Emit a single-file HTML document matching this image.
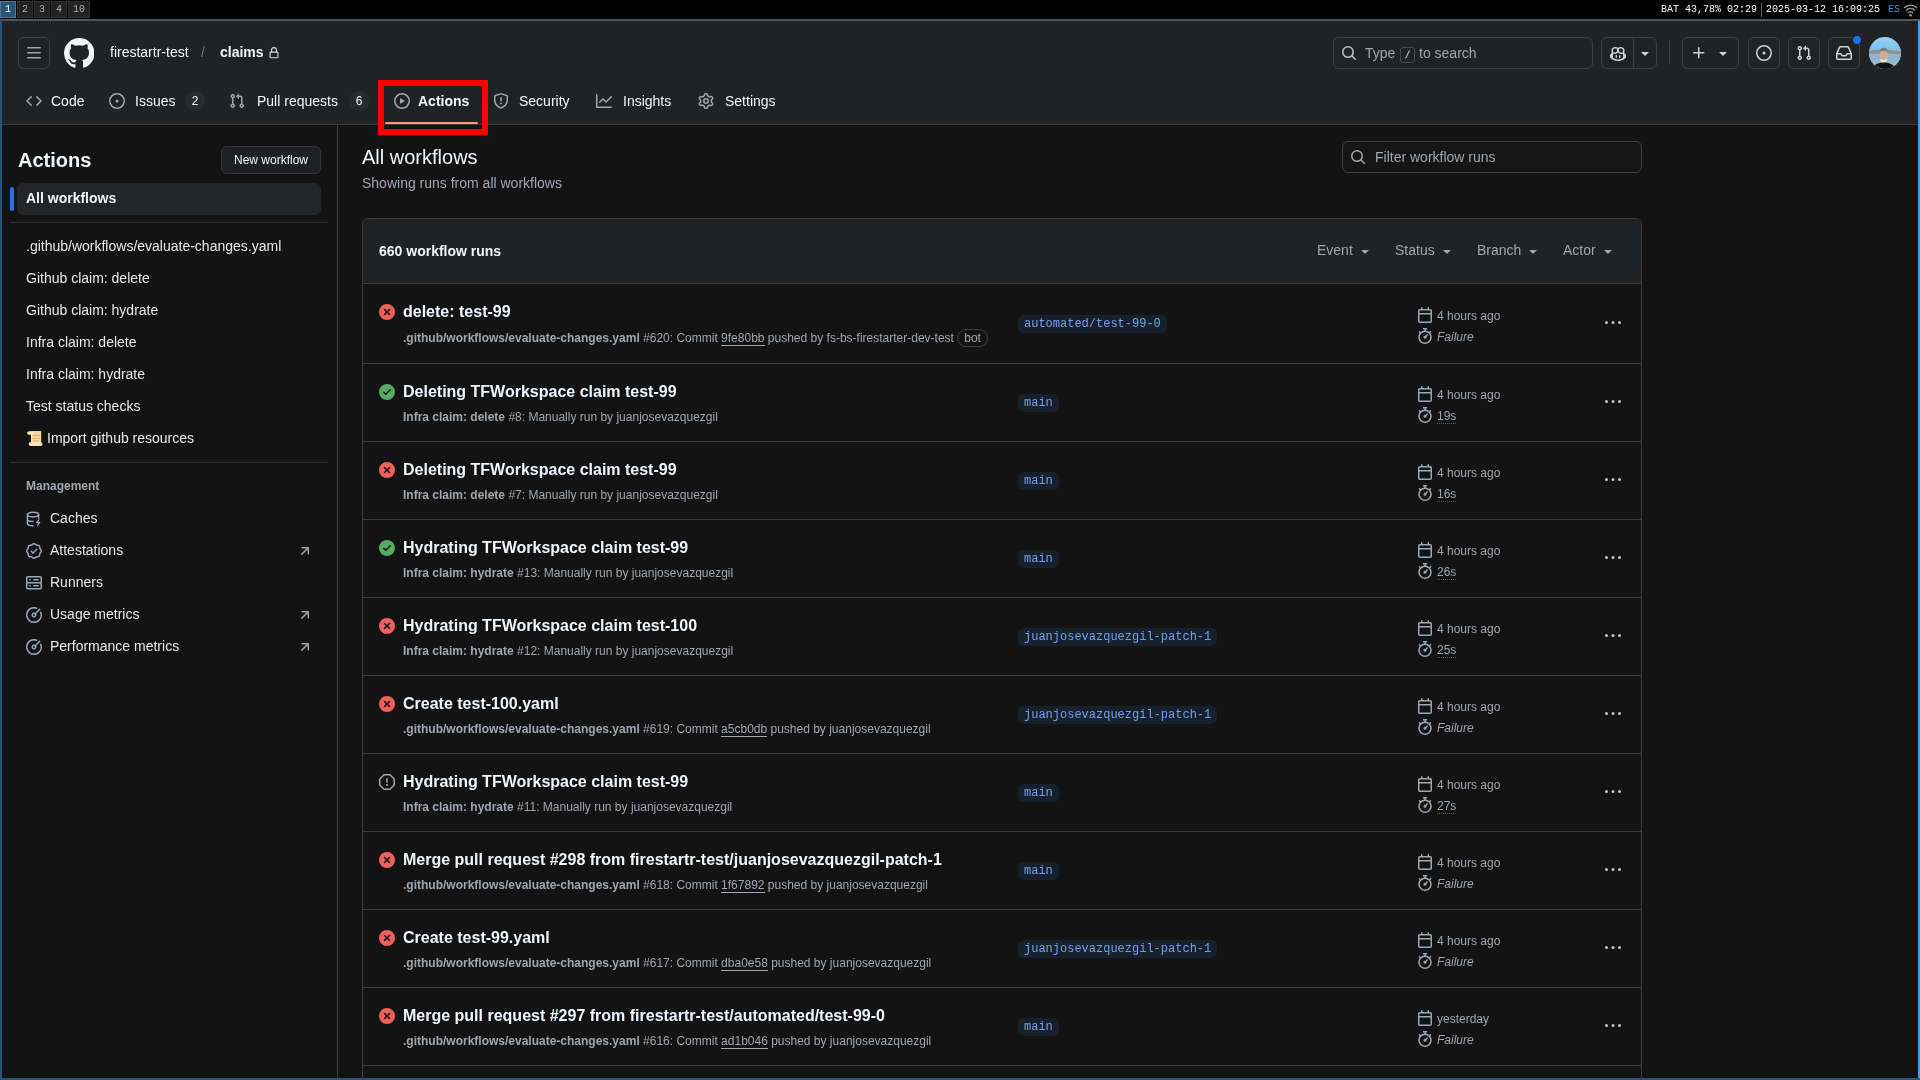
<!DOCTYPE html>
<html><head><meta charset="utf-8"><style>
html,body{margin:0;padding:0;width:1920px;height:1080px;overflow:hidden;background:#131313;font-family:"Liberation Sans",sans-serif}
</style></head><body><div style="position:absolute;left:0;top:0;width:1920px;height:1080px;will-change:transform">
<div style="position:absolute;left:0px;top:0px;width:1920px;height:19px;background:#000"></div><div style="position:absolute;left:0px;top:1px;width:14px;height:15px;background:#285577;border:1px solid #4c7899;color:#fff;font-family:'Liberation Mono',monospace;font-size:10px;line-height:15px;text-align:center"><span style="display:inline-block;transform:scaleY(1.15)">1</span></div><div style="position:absolute;left:17px;top:1px;width:14px;height:15px;background:#222;border:1px solid #333;color:#aaa;font-family:'Liberation Mono',monospace;font-size:10px;line-height:15px;text-align:center"><span style="display:inline-block;transform:scaleY(1.15)">2</span></div><div style="position:absolute;left:34px;top:1px;width:14px;height:15px;background:#222;border:1px solid #333;color:#aaa;font-family:'Liberation Mono',monospace;font-size:10px;line-height:15px;text-align:center"><span style="display:inline-block;transform:scaleY(1.15)">3</span></div><div style="position:absolute;left:51px;top:1px;width:14px;height:15px;background:#222;border:1px solid #333;color:#aaa;font-family:'Liberation Mono',monospace;font-size:10px;line-height:15px;text-align:center"><span style="display:inline-block;transform:scaleY(1.15)">4</span></div><div style="position:absolute;left:68px;top:1px;width:20px;height:15px;background:#222;border:1px solid #333;color:#aaa;font-family:'Liberation Mono',monospace;font-size:10px;line-height:15px;text-align:center"><span style="display:inline-block;transform:scaleY(1.15)">10</span></div><div style="position:absolute;left:1661px;top:2px;height:15px;line-height:15px;font-family:'Liberation Mono',monospace;font-size:10px;color:#fff;white-space:nowrap">BAT 43,78% 02:29</div><div style="position:absolute;left:1761px;top:3px;width:1px;height:14px;background:#666"></div><div style="position:absolute;left:1766px;top:2px;height:15px;line-height:15px;font-family:'Liberation Mono',monospace;font-size:10px;color:#fff;white-space:nowrap">2025-03-12 16:09:25</div><div style="position:absolute;left:1888px;top:2px;height:15px;line-height:15px;font-family:'Liberation Mono',monospace;font-size:10px;color:#4a90c8;white-space:nowrap">ES</div><svg style="position:absolute;left:1903px;top:2px" width="15" height="15" viewBox="0 0 15 15"><g fill="none" stroke="#999" stroke-width="1.3"><path d="M1 6 A9 9 0 0 1 14 6"/><path d="M3 8.5 A6 6 0 0 1 12 8.5"/><path d="M5 11 A3.2 3.2 0 0 1 10 11"/></g><circle cx="7.5" cy="13.3" r="1.3" fill="#999"/></svg><div style="position:absolute;left:0px;top:19px;width:1920px;height:2px;background:#4a5866"></div><div style="position:absolute;left:0px;top:19px;width:2px;height:1061px;background:#265479"></div><div style="position:absolute;left:1918px;top:21px;width:2px;height:1059px;background:#3aa0f2"></div><div style="position:absolute;left:0px;top:1078px;width:1920px;height:2px;background:#2b5578"></div><div style="position:absolute;left:2px;top:125px;width:1916px;height:953px;background:#131313"></div><div style="position:absolute;left:2px;top:21px;width:1916px;height:103px;background:#212224"></div><div style="position:absolute;left:2px;top:124px;width:1916px;height:1px;background:#3b3c3e"></div><div style="position:absolute;left:18px;top:37px;width:32px;height:32px;box-sizing:border-box;border:1px solid #3d3f42;border-radius:6px"></div><svg style="position:absolute;left:26px;top:45px;" width="16" height="16" viewBox="0 0 16 16"><path fill="#a0a6ae" d="M1 2.75A.75.75 0 0 1 1.75 2h12.5a.75.75 0 0 1 0 1.5H1.75A.75.75 0 0 1 1 2.75Zm0 5A.75.75 0 0 1 1.75 7h12.5a.75.75 0 0 1 0 1.5H1.75A.75.75 0 0 1 1 7.75ZM1.75 12h12.5a.75.75 0 0 1 0 1.5H1.75a.75.75 0 0 1 0-1.5Z"/></svg><svg style="position:absolute;left:63.6px;top:37.7px;" width="30.5" height="30.5" viewBox="0 0 16 16"><path fill="#f0f6fc" d="M8 0c4.42 0 8 3.58 8 8a8.013 8.013 0 0 1-5.45 7.59c-.4.08-.55-.17-.55-.38 0-.27.01-1.130.01-2.2 0-.75-.25-1.23-.54-1.48 1.78-.2 3.65-.88 3.65-3.95 0-.88-.31-1.59-.82-2.15.08-.2.36-1.02-.08-2.12 0 0-.67-.22-2.2.82-.64-.18-1.32-.27-2-.27-.68 0-1.36.09-2 .27-1.53-1.03-2.2-.82-2.2-.82-.44 1.1-.16 1.920-.08 2.12-.51.56-.82 1.28-.82 2.15 0 3.06 1.86 3.75 3.64 3.95-.23.2-.44.55-.51 1.07-.46.21-1.61.55-2.33-.66-.15-.24-.6-.83-1.23-.82-.67.01-.27.38.01.53.34.19.73.9.82 1.13.16.45.68 1.31 2.69.94 0 .67.01 1.3.01 1.49 0 .21-.15.45-.55.38A7.995 7.995 0 0 1 0 8c0-4.42 3.58-8 8-8Z"/></svg><div style="position:absolute;left:110px;top:42.0px;height:20px;line-height:20px;font-size:14px;color:#f0f6fc;font-weight:normal;white-space:nowrap;">firestartr-test</div><div style="position:absolute;left:201px;top:42.0px;height:20px;line-height:20px;font-size:14px;color:#6e7681;font-weight:normal;white-space:nowrap;">/</div><div style="position:absolute;left:220px;top:42.0px;height:20px;line-height:20px;font-size:14px;color:#f0f6fc;font-weight:bold;white-space:nowrap;">claims</div><svg style="position:absolute;left:268px;top:46.7px;" width="12" height="12" viewBox="0 0 16 16"><path fill="#d8dadd" d="M4 4a4 4 0 0 1 8 0v2h.25c.966 0 1.75.784 1.75 1.75v5.5A1.75 1.75 0 0 1 12.25 15h-8.5A1.75 1.75 0 0 1 2 13.25v-5.5C2 6.784 2.784 6 3.750 6H4Zm8.25 3.5h-8.5a.25.25 0 0 0-.25.25v5.5c0 .138.112.25.25.25h8.5a.25.25 0 0 0 .25-.25v-5.5a.25.25 0 0 0-.25-.25ZM10.5 6V4a2.5 2.5 0 1 0-5 0v2Z"/></svg><div style="position:absolute;left:1333px;top:37px;width:260px;height:32px;box-sizing:border-box;border:1px solid #3d3f42;border-radius:6px"></div><svg style="position:absolute;left:1341.3px;top:45px;" width="16" height="16" viewBox="0 0 16 16"><path fill="#c0c3c7" d="M10.68 11.74a6 6 0 0 1-7.922-8.982 6 6 0 0 1 8.982 7.922l3.04 3.04a.749.749 0 0 1-.326 1.275.749.749 0 0 1-.734-.215ZM11.5 7a4.499 4.499 0 1 0-8.997 0A4.499 4.499 0 0 0 11.5 7Z"/></svg><div style="position:absolute;left:1365px;top:43.0px;height:20px;line-height:20px;font-size:14px;color:#a0a6ae;font-weight:normal;white-space:nowrap;">Type</div><div style="position:absolute;left:1400px;top:47px;width:15px;height:16px;box-sizing:border-box;border:1px solid #4a4c50;border-radius:3px"></div><svg style="position:absolute;left:1400px;top:47px" width="15" height="16"><path d="M5.6 11.5 9.4 3.5" stroke="#b8bbbf" stroke-width="1.1"/></svg><div style="position:absolute;left:1419px;top:43.0px;height:20px;line-height:20px;font-size:14px;color:#a0a6ae;font-weight:normal;white-space:nowrap;">to search</div><div style="position:absolute;left:1601px;top:37px;width:56px;height:32px;box-sizing:border-box;border:1px solid #3d3f42;border-radius:6px"></div><div style="position:absolute;left:1633px;top:38px;width:1px;height:30px;background:#3d3f42"></div><svg style="position:absolute;left:1610px;top:45.5px;" width="16" height="16" viewBox="0 0 16 16"><path fill="#d0d3d6" d="M7.998 15.035c-4.562 0-7.873-2.914-7.998-3.749V9.338c.085-.628.677-1.686 1.588-2.065.013-.07.024-.143.036-.218.029-.183.06-.384.126-.612-.201-.508-.254-1.084-.254-1.656 0-.87.128-1.769.693-2.484.579-.733 1.494-1.124 2.724-1.261 1.206-.134 2.262.034 2.944.765.05.053.096.108.139.165.044-.057.094-.112.143-.165.682-.731 1.738-.899 2.944-.765 1.23.137 2.145.528 2.724 1.261.566.715.693 1.614.693 2.484 0 .572-.053 1.148-.254 1.656.066.228.098.429.126.612.012.076.024.148.037.218.924.385 1.522 1.471 1.591 2.095v1.872c0 .766-3.351 3.795-8.002 3.795Zm0-1.485c2.28 0 4.584-1.11 5.002-1.433V7.862l-.023-.116c-.49.21-1.075.291-1.727.291-1.146 0-2.059-.327-2.71-.991A3.222 3.222 0 0 1 8 6.303a3.24 3.240 0 0 1-.544.743c-.65.664-1.563.991-2.71.991-.652 0-1.236-.081-1.727-.291l-.023.116v4.255c.419.323 2.722 1.433 5.002 1.433ZM6.762 2.830c-.193-.206-.637-.413-1.682-.297-1.019.113-1.479.404-1.713.7-.247.312-.369.789-.369 1.554 0 .793.129 1.171.308 1.371.162.181.519.379 1.442.379.853 0 1.339-.235 1.638-.54.315-.322.527-.827.617-1.553.117-.935-.037-1.395-.241-1.614Zm4.155-.297c-1.044-.116-1.488.091-1.681.297-.204.219-.359.679-.242 1.614.091.726.303 1.231.618 1.553.299.305.784.54 1.638.54.922 0 1.28-.198 1.442-.379.179-.2.308-.578.308-1.371 0-.765-.123-1.242-.37-1.554-.233-.296-.693-.587-1.713-.7Z M6.25 9.037a.75.75 0 0 1 .75.75v1.501a.75.75 0 0 1-1.5 0V9.787a.75.75 0 0 1 .75-.75Zm4.25.75v1.501a.75.75 0 0 1-1.5 0V9.787a.75.75 0 0 1 1.5 0Z"/></svg><svg style="position:absolute;left:1637px;top:45px;" width="16" height="16" viewBox="0 0 16 16"><path fill="#d0d3d6" d="m4.427 7.427 3.396 3.396a.25.25 0 0 0 .354 0l3.396-3.396A.25.25 0 0 0 11.396 7H4.604a.25.25 0 0 0-.177.427Z"/></svg><div style="position:absolute;left:1669px;top:40px;width:1px;height:24px;background:#3d3f42"></div><div style="position:absolute;left:1682px;top:37px;width:57px;height:32px;box-sizing:border-box;border:1px solid #3d3f42;border-radius:6px"></div><svg style="position:absolute;left:1690.5px;top:45px;" width="16" height="16" viewBox="0 0 16 16"><path fill="#d0d3d6" d="M7.75 2a.75.75 0 0 1 .75.75V7h4.25a.75.75 0 0 1 0 1.5H8.5v4.25a.75.75 0 0 1-1.5 0V8.5H2.75a.75.75 0 0 1 0-1.5H7V2.75A.75.75 0 0 1 7.75 2Z"/></svg><svg style="position:absolute;left:1715px;top:45px;" width="16" height="16" viewBox="0 0 16 16"><path fill="#d0d3d6" d="m4.427 7.427 3.396 3.396a.25.25 0 0 0 .354 0l3.396-3.396A.25.25 0 0 0 11.396 7H4.604a.25.25 0 0 0-.177.427Z"/></svg><div style="position:absolute;left:1748px;top:37px;width:32px;height:32px;box-sizing:border-box;border:1px solid #3d3f42;border-radius:6px"></div><svg style="position:absolute;left:1756px;top:45px;" width="16" height="16" viewBox="0 0 16 16"><path fill="#d0d3d6" d="M8 9.5a1.5 1.5 0 1 0 0-3 1.5 1.5 0 0 0 0 3Z M8 0a8 8 0 1 1 0 16A8 8 0 0 1 8 0ZM1.5 8a6.5 6.5 0 1 0 13 0 6.5 6.5 0 0 0-13 0Z"/></svg><div style="position:absolute;left:1788px;top:37px;width:32px;height:32px;box-sizing:border-box;border:1px solid #3d3f42;border-radius:6px"></div><svg style="position:absolute;left:1796px;top:45px;" width="16" height="16" viewBox="0 0 16 16"><path fill="#d0d3d6" d="M1.5 3.25a2.25 2.25 0 1 1 3 2.122v5.256a2.251 2.251 0 1 1-1.5 0V5.372A2.25 2.25 0 0 1 1.5 3.25Zm5.677-.177L9.573.677A.25.25 0 0 1 10 .854V2.5h1A2.5 2.5 0 0 1 13.5 5v5.628a2.251 2.251 0 1 1-1.5 0V5a1 1 0 0 0-1-1h-1v1.646a.25.25 0 0 1-.427.177L7.177 3.427a.25.25 0 0 1 0-.354ZM3.75 2.5a.75.75 0 1 0 0 1.5.75.75 0 0 0 0-1.5Zm0 9.5a.75.75 0 1 0 0 1.5.75.75 0 0 0 0-1.5Zm8.25.75a.75.75 0 1 0 1.5 0 .75.75 0 0 0-1.5 0Z"/></svg><div style="position:absolute;left:1828px;top:37px;width:32px;height:32px;box-sizing:border-box;border:1px solid #3d3f42;border-radius:6px"></div><svg style="position:absolute;left:1836px;top:45px;" width="16" height="16" viewBox="0 0 16 16"><path fill="#d0d3d6" d="M2.8 2.06A1.75 1.75 0 0 1 4.41 1h7.18c.7 0 1.333.417 1.61 1.06l2.74 6.395c.04.093.06.194.06.295v4.5A1.75 1.75 0 0 1 14.25 15H1.75A1.75 1.75 0 0 1 0 13.25v-4.5c0-.101.02-.202.06-.295Zm1.61.44a.25.25 0 0 0-.23.152L1.887 8H4.75a.75.75 0 0 1 .6.3L6.625 10h2.75l1.275-1.7a.75.75 0 0 1 .6-.3h2.863L11.820 2.652a.25.25 0 0 0-.23-.152Zm10.09 7h-2.875l-1.275 1.7a.75.75 0 0 1-.6.3h-3.5a.75.75 0 0 1-.6-.3L4.375 9.5H1.5v3.75c0 .138.112.25.25.25h12.5a.25.25 0 0 0 .25-.25Z"/></svg><div style="position:absolute;left:1851.5px;top:34.5px;width:8px;height:8px;background:#1f6feb;border-radius:50%;border:1.5px solid #212224;box-sizing:content-box"></div><svg style="position:absolute;left:1869px;top:37px" width="32" height="32" viewBox="0 0 32 32"><defs><clipPath id="av"><circle cx="16" cy="16" r="16"/></clipPath><linearGradient id="sky" x1="0" y1="0" x2="0" y2="1"><stop offset="0" stop-color="#9ad3f2"/><stop offset="0.35" stop-color="#7cc3ec"/><stop offset="1" stop-color="#7cc3ec"/></linearGradient><linearGradient id="wat" x1="0" y1="0" x2="0" y2="1"><stop offset="0" stop-color="#aab7bd"/><stop offset="0.4" stop-color="#8fb3c8"/><stop offset="1" stop-color="#9cc4da"/></linearGradient></defs><g clip-path="url(#av)"><rect width="32" height="32" fill="url(#sky)"/><rect x="0" y="12" width="32" height="20" fill="url(#wat)"/><path d="M0 13.5 6 12.5 12 13 20 12.8 26 13.5 32 14v3H0Z" fill="#7d8a8f" opacity=".7"/><path d="M10.5 17.5c0-4 1.6-6.5 4.2-6.5s4.3 2.5 4.3 6.5v4c0 2-1.8 4-4.3 4s-4.2-2-4.2-4Z" fill="#c8ada0"/><path d="M10.3 16c0-3.3 1.8-5.2 4.4-5.2s4.5 1.9 4.5 5.2c-.8-1.8-2.4-2.3-4.5-2.3s-3.6.5-4.4 2.3Z" fill="#7a7a7a"/><path d="M10.8 21.5c.4 2.6 2 4.5 3.9 4.5s3.6-1.9 4-4.5c-.9 1-2.2 1.4-4 1.4s-3-.4-3.9-1.4Z" fill="#e8e4de"/><path d="M3 34c.5-5.5 4.5-8.6 11.7-8.6S26.5 28.5 27 34Z" fill="#121212"/></g></svg><svg style="position:absolute;left:26px;top:93px;" width="16" height="16" viewBox="0 0 16 16"><path fill="#a0a6ae" d="m11.28 3.22 4.25 4.25a.75.75 0 0 1 0 1.06l-4.25 4.25a.749.749 0 0 1-1.275-.326.749.749 0 0 1 .215-.734L13.940 8l-3.72-3.72a.749.749 0 0 1 .326-1.275.749.749 0 0 1 .734.215Zm-6.56 0a.751.751 0 0 1 1.042.018.751.751 0 0 1 .018 1.042L2.060 8l3.72 3.72a.749.749 0 0 1-.326 1.275.749.749 0 0 1-.734-.215L.47 8.53a.75.75 0 0 1 0-1.06Z"/></svg><div style="position:absolute;left:51px;top:91.0px;height:20px;line-height:20px;font-size:14px;color:#f0f6fc;font-weight:normal;white-space:nowrap;">Code</div><svg style="position:absolute;left:109px;top:93px;" width="16" height="16" viewBox="0 0 16 16"><path fill="#a0a6ae" d="M8 9.5a1.5 1.5 0 1 0 0-3 1.5 1.5 0 0 0 0 3Z M8 0a8 8 0 1 1 0 16A8 8 0 0 1 8 0ZM1.5 8a6.5 6.5 0 1 0 13 0 6.5 6.5 0 0 0-13 0Z"/></svg><div style="position:absolute;left:135px;top:91.0px;height:20px;line-height:20px;font-size:14px;color:#f0f6fc;font-weight:normal;white-space:nowrap;">Issues</div><div style="position:absolute;left:185px;top:91px;width:20px;height:20px;border-radius:10px;background:#2a2b2e;color:#f0f6fc;font-size:12px;line-height:20px;text-align:center">2</div><svg style="position:absolute;left:229px;top:93px;" width="16" height="16" viewBox="0 0 16 16"><path fill="#a0a6ae" d="M1.5 3.25a2.25 2.25 0 1 1 3 2.122v5.256a2.251 2.251 0 1 1-1.5 0V5.372A2.25 2.25 0 0 1 1.5 3.25Zm5.677-.177L9.573.677A.25.25 0 0 1 10 .854V2.5h1A2.5 2.5 0 0 1 13.5 5v5.628a2.251 2.251 0 1 1-1.5 0V5a1 1 0 0 0-1-1h-1v1.646a.25.25 0 0 1-.427.177L7.177 3.427a.25.25 0 0 1 0-.354ZM3.75 2.5a.75.75 0 1 0 0 1.5.75.75 0 0 0 0-1.5Zm0 9.5a.75.75 0 1 0 0 1.5.75.75 0 0 0 0-1.5Zm8.25.75a.75.75 0 1 0 1.5 0 .75.75 0 0 0-1.5 0Z"/></svg><div style="position:absolute;left:257px;top:91.0px;height:20px;line-height:20px;font-size:14px;color:#f0f6fc;font-weight:normal;white-space:nowrap;">Pull requests</div><div style="position:absolute;left:349px;top:91px;width:20px;height:20px;border-radius:10px;background:#2a2b2e;color:#f0f6fc;font-size:12px;line-height:20px;text-align:center">6</div><svg style="position:absolute;left:394px;top:93px;" width="16" height="16" viewBox="0 0 16 16"><path fill="#a0a6ae" d="M8 0a8 8 0 1 1 0 16A8 8 0 0 1 8 0ZM1.5 8a6.5 6.5 0 1 0 13 0 6.5 6.5 0 0 0-13 0Zm4.879-2.773 4.264 2.559a.25.25 0 0 1 0 .428l-4.264 2.559A.25.25 0 0 1 6 10.559V5.442a.25.25 0 0 1 .379-.215Z"/></svg><div style="position:absolute;left:418px;top:91.0px;height:20px;line-height:20px;font-size:14px;color:#f0f6fc;font-weight:bold;white-space:nowrap;">Actions</div><svg style="position:absolute;left:493px;top:93px;" width="16" height="16" viewBox="0 0 16 16"><path fill="#a0a6ae" d="M7.467.133a1.748 1.748 0 0 1 1.066 0l5.25 1.68A1.75 1.75 0 0 1 15 3.48V7c0 1.566-.32 3.182-1.303 4.682-.983 1.498-2.585 2.813-5.032 3.855a1.697 1.697 0 0 1-1.33 0c-2.447-1.042-4.049-2.357-5.032-3.855C1.32 10.182 1 8.566 1 7V3.48a1.755 1.755 0 0 1 1.217-1.667Zm.61 1.429a.25.25 0 0 0-.153 0l-5.25 1.68a.25.25 0 0 0-.174.238V7c0 1.358.275 2.666 1.057 3.86.784 1.194 2.121 2.34 4.366 3.297a.196.196 0 0 0 .154 0c2.245-.956 3.582-2.104 4.366-3.298C13.225 9.666 13.5 8.36 13.5 7V3.48a.251.251 0 0 0-.174-.237l-5.25-1.68ZM8.75 4.75v3a.75.75 0 0 1-1.5 0v-3a.75.75 0 0 1 1.5 0ZM9 10.5a1 1 0 1 1-2 0 1 1 0 0 1 2 0Z"/></svg><div style="position:absolute;left:519px;top:91.0px;height:20px;line-height:20px;font-size:14px;color:#f0f6fc;font-weight:normal;white-space:nowrap;">Security</div><svg style="position:absolute;left:596px;top:93px;" width="16" height="16" viewBox="0 0 16 16"><path fill="#a0a6ae" d="M1.5 1.75V13.5h13.75a.75.75 0 0 1 0 1.5H.75a.75.75 0 0 1-.75-.75V1.75a.75.75 0 0 1 1.5 0Zm14.28 2.53-5.25 5.25a.75.75 0 0 1-1.06 0L7 7.06 4.28 9.78a.751.751 0 0 1-1.042-.018.751.751 0 0 1-.018-1.042l3.25-3.25a.75.75 0 0 1 1.06 0L10 7.94l4.72-4.72a.751.751 0 0 1 1.042.018.751.751 0 0 1 .018 1.042Z"/></svg><div style="position:absolute;left:623px;top:91.0px;height:20px;line-height:20px;font-size:14px;color:#f0f6fc;font-weight:normal;white-space:nowrap;">Insights</div><svg style="position:absolute;left:698px;top:93px;" width="16" height="16" viewBox="0 0 16 16"><path fill="#a0a6ae" d="M8 0a8.2 8.2 0 0 1 .701.031C9.444.095 9.99.645 10.16 1.29l.288 1.107c.018.066.079.158.212.224.231.114.454.243.668.386.123.082.233.09.299.071l1.103-.303c.644-.176 1.392.021 1.82.63.27.385.506.792.704 1.218.315.675.111 1.422-.364 1.891l-.814.806c-.049.048-.098.147-.088.294.016.257.016.515 0 .772-.01.147.038.246.088.294l.814.806c.475.469.679 1.216.364 1.891a7.977 7.977 0 0 1-.704 1.217c-.428.61-1.176.807-1.82.63l-1.102-.302c-.067-.019-.177-.011-.3.071a5.909 5.909 0 0 1-.668.386c-.133.066-.194.158-.211.224l-.29 1.106c-.168.646-.715 1.196-1.458 1.26a8.006 8.006 0 0 1-1.402 0c-.743-.064-1.289-.614-1.458-1.26l-.289-1.106c-.018-.066-.079-.158-.212-.224a5.738 5.738 0 0 1-.668-.386c-.123-.082-.233-.09-.299-.071l-1.103.303c-.644.176-1.392-.021-1.82-.63a8.12 8.12 0 0 1-.704-1.218c-.315-.675-.111-1.422.363-1.891l.815-.806c.05-.048.098-.147.088-.294a6.214 6.214 0 0 1 0-.772c.01-.147-.038-.246-.088-.294l-.815-.806C.635 6.045.431 5.298.746 4.623a7.92 7.920 0 0 1 .704-1.217c.428-.61 1.176-.807 1.82-.63l1.102.302c.067.019.177.011.3-.071.214-.143.437-.272.668-.386.133-.066.194-.158.211-.224l.29-1.106C6.009.645 6.556.095 7.299.03 7.53.01 7.764 0 8 0Zm-.571 1.525c-.036.003-.108.036-.137.146l-.289 1.105c-.147.561-.549.967-.998 1.189-.173.086-.34.183-.5.29-.417.278-.97.423-1.529.27l-1.103-.303c-.109-.03-.175.016-.195.045-.22.312-.412.644-.573.99-.014.031-.021.11.059.19l.815.806c.411.406.562.957.53 1.456a4.709 4.709 0 0 0 0 .582c.032.499-.119 1.05-.53 1.456l-.815.806c-.081.08-.073.159-.059.19.162.346.353.677.573.989.02.03.085.076.195.046l1.102-.303c.56-.153 1.113-.008 1.53.27.161.107.328.204.501.29.447.222.85.629.997 1.189l.289 1.105c.029.109.101.143.137.146a6.6 6.6 0 0 0 1.142 0c.036-.003.108-.036.137-.146l.289-1.105c.147-.561.549-.967.998-1.189.173-.086.34-.183.5-.29.417-.278.97-.423 1.529-.27l1.103.303c.109.029.175-.016.195-.045.22-.313.411-.644.573-.99.014-.031.021-.11-.059-.19l-.815-.806c-.411-.406-.562-.957-.53-1.456a4.709 4.709 0 0 0 0-.582c-.032-.499.119-1.05.53-1.456l.815-.806c.081-.08.073-.159.059-.19a6.464 6.464 0 0 0-.573-.989c-.02-.03-.085-.076-.195-.046l-1.102.303c-.56.153-1.113.008-1.53-.27a4.44 4.44 0 0 0-.501-.29c-.447-.222-.85-.629-.997-1.189l-.289-1.105c-.029-.11-.101-.143-.137-.146a6.6 6.6 0 0 0-1.142 0ZM11 8a3 3 0 1 1-6 0 3 3 0 0 1 6 0ZM9.5 8a1.5 1.5 0 1 0-3.001.001A1.5 1.5 0 0 0 9.5 8Z"/></svg><div style="position:absolute;left:725px;top:91.0px;height:20px;line-height:20px;font-size:14px;color:#f0f6fc;font-weight:normal;white-space:nowrap;">Settings</div><div style="position:absolute;left:385px;top:122px;width:93px;height:2px;background:#f39a7b;border-radius:1px"></div><div style="position:absolute;left:378px;top:80px;width:110px;height:55px;box-sizing:border-box;border:6px solid #ff0000"></div><div style="position:absolute;left:337px;top:125px;width:1px;height:953px;background:#3b3c3e"></div><div style="position:absolute;left:18px;top:145.0px;height:30px;line-height:30px;font-size:20px;color:#f0f6fc;font-weight:bold;white-space:nowrap;">Actions</div><div style="position:absolute;left:221px;top:146px;width:100px;height:28px;box-sizing:border-box;background:#202123;border:1px solid #333437;border-radius:6px"></div><div style="position:absolute;left:234px;top:151.0px;height:18px;line-height:18px;font-size:12px;color:#f0f6fc;font-weight:normal;white-space:nowrap;">New workflow</div><div style="position:absolute;left:17px;top:183px;width:304px;height:32px;background:#242527;border-radius:6px"></div><div style="position:absolute;left:10px;top:187px;width:4px;height:24px;background:#2274ea;border-radius:2px"></div><div style="position:absolute;left:26px;top:188.0px;height:20px;line-height:20px;font-size:14px;color:#f0f6fc;font-weight:bold;white-space:nowrap;">All workflows</div><div style="position:absolute;left:10px;top:222px;width:318px;height:1px;background:#2e3033"></div><div style="position:absolute;left:26px;top:236.0px;height:20px;line-height:20px;font-size:14px;color:#e6e8eb;font-weight:normal;white-space:nowrap;">.github/workflows/evaluate-changes.yaml</div><div style="position:absolute;left:26px;top:268.0px;height:20px;line-height:20px;font-size:14px;color:#e6e8eb;font-weight:normal;white-space:nowrap;">Github claim: delete</div><div style="position:absolute;left:26px;top:300.0px;height:20px;line-height:20px;font-size:14px;color:#e6e8eb;font-weight:normal;white-space:nowrap;">Github claim: hydrate</div><div style="position:absolute;left:26px;top:332.0px;height:20px;line-height:20px;font-size:14px;color:#e6e8eb;font-weight:normal;white-space:nowrap;">Infra claim: delete</div><div style="position:absolute;left:26px;top:364.0px;height:20px;line-height:20px;font-size:14px;color:#e6e8eb;font-weight:normal;white-space:nowrap;">Infra claim: hydrate</div><div style="position:absolute;left:26px;top:396.0px;height:20px;line-height:20px;font-size:14px;color:#e6e8eb;font-weight:normal;white-space:nowrap;">Test status checks</div><svg style="position:absolute;left:26px;top:430px" width="17" height="17" viewBox="0 0 17 17"><rect x="5" y="1" width="10.2" height="14" fill="#f6d49c"/><path d="M1.2 3c0-1 .8-1.8 1.8-1.8h4v3.6H3C2 4.8 1.2 4 1.2 3Z" fill="#fbe3b6"/><rect x="2.7" y="12" width="13.8" height="4" rx="2" fill="#fbe2b8"/><path d="M6 5.5h8.2M6 8.4h8.2M7 11h6" stroke="#d9ae6a" stroke-width=".8"/><rect x="5" y="1" width="1.2" height="11" fill="#fff0d4" opacity=".7"/></svg><div style="position:absolute;left:47px;top:428.0px;height:20px;line-height:20px;font-size:14px;color:#e6e8eb;font-weight:normal;white-space:nowrap;">Import github resources</div><div style="position:absolute;left:10px;top:462px;width:318px;height:1px;background:#2e3033"></div><div style="position:absolute;left:26px;top:477.0px;height:18px;line-height:18px;font-size:12px;color:#a0a6ae;font-weight:bold;white-space:nowrap;">Management</div><svg style="position:absolute;left:26px;top:511px" width="16" height="16" viewBox="0 0 16 16"><g fill="none" stroke="#a0a6ae" stroke-width="1.5" stroke-linecap="round"><ellipse cx="7" cy="3.6" rx="5.6" ry="2.3"/><path d="M1.4 3.6v9c0 1.2 2.4 2.2 5.6 2.3M1.4 8.2c0 1.2 2.4 2.2 5.6 2.3M12.6 3.6v3.4"/></g><path fill="#a0a6ae" d="M13.2 7.6 9.6 12.1h2.3l-1.1 3.7 3.9-4.9h-2.3l1.3-3.3Z"/></svg><div style="position:absolute;left:50px;top:508.0px;height:20px;line-height:20px;font-size:14px;color:#e6e8eb;font-weight:normal;white-space:nowrap;">Caches</div><svg style="position:absolute;left:26px;top:543px;" width="16" height="16" viewBox="0 0 16 16"><path fill="#a0a6ae" d="m9.585.52.929.68c.153.112.331.186.518.215l1.138.175a2.678 2.678 0 0 1 2.240 2.240l.174 1.139c.029.187.103.365.215.518l.68.928a2.677 2.677 0 0 1 0 3.170l-.68.928a1.174 1.174 0 0 0-.215.518l-.175 1.138a2.678 2.678 0 0 1-2.241 2.241l-1.138.175a1.170 1.170 0 0 0-.518.215l-.928.68a2.677 2.677 0 0 1-3.170 0l-.928-.68a1.174 1.174 0 0 0-.518-.215L3.830 14.410a2.678 2.678 0 0 1-2.240-2.240l-.175-1.138a1.170 1.170 0 0 0-.215-.518l-.68-.928a2.677 2.677 0 0 1 0-3.170l.68-.928c.112-.153.186-.331.215-.518l.175-1.140a2.678 2.678 0 0 1 2.240-2.240l1.139-.175c.187-.029.365-.103.518-.215l.928-.68a2.677 2.677 0 0 1 3.170 0ZM7.303 1.728l-.927.68a2.670 2.670 0 0 1-1.180.489l-1.137.174a1.179 1.179 0 0 0-.987.987l-.174 1.136a2.677 2.677 0 0 1-.489 1.180l-.68.928a1.180 1.180 0 0 0 0 1.394l.68.927c.256.348.424.753.489 1.180l.174 1.137c.078.509.478.909.987.987l1.136.174a2.670 2.670 0 0 1 1.180.489l.928.68c.414.305.979.305 1.394 0l.927-.68a2.670 2.670 0 0 1 1.180-.489l1.137-.174a1.180 1.180 0 0 0 .987-.987l.174-1.136a2.670 2.670 0 0 1 .489-1.180l.68-.928a1.176 1.176 0 0 0 0-1.394l-.68-.927a2.686 2.686 0 0 1-.489-1.180l-.174-1.137a1.179 1.179 0 0 0-.987-.987l-1.136-.174a2.677 2.677 0 0 1-1.180-.489l-.928-.68a1.176 1.176 0 0 0-1.394 0ZM11.280 6.780l-3.750 3.750a.75.75 0 0 1-1.060 0L4.720 8.780a.751.751 0 0 1 .018-1.042.751.751 0 0 1 1.042-.018l1.220 1.220 3.220-3.220a.751.751 0 0 1 1.042.018.751.751 0 0 1 .018 1.042Z"/></svg><div style="position:absolute;left:50px;top:540.0px;height:20px;line-height:20px;font-size:14px;color:#e6e8eb;font-weight:normal;white-space:nowrap;">Attestations</div><svg style="position:absolute;left:297px;top:543px;" width="16" height="16" viewBox="0 0 16 16"><path fill="#a0a6ae" d="M4.53 4.75A.75.75 0 0 1 5.28 4h6.01a.75.75 0 0 1 .75.75v6.01a.75.75 0 0 1-1.5 0v-4.2l-5.26 5.27a.749.749 0 0 1-1.275-.326.749.749 0 0 1 .215-.734L9.48 5.5h-4.2a.75.75 0 0 1-.75-.75Z"/></svg><svg style="position:absolute;left:26px;top:575px;" width="16" height="16" viewBox="0 0 16 16"><path fill="#a0a6ae" d="M1.75 1h12.5c.966 0 1.75.784 1.75 1.75v4c0 .372-.116.717-.314 1 .198.283.314.628.314 1v4a1.75 1.75 0 0 1-1.75 1.75H1.75A1.75 1.75 0 0 1 0 12.75v-4c0-.358.109-.707.314-1a1.739 1.739 0 0 1-.314-1v-4C0 1.784.784 1 1.75 1ZM1.5 2.75v4c0 .138.112.25.25.25h12.5a.25.25 0 0 0 .25-.25v-4a.25.25 0 0 0-.25-.25H1.75a.25.25 0 0 0-.25.25Zm.25 5.75a.25.25 0 0 0-.25.25v4c0 .138.112.25.25.25h12.5a.25.25 0 0 0 .25-.25v-4a.25.25 0 0 0-.25-.25ZM7 4.75A.75.75 0 0 1 7.75 4h4.5a.75.75 0 0 1 0 1.5h-4.5A.75.75 0 0 1 7 4.75ZM7.75 10h4.5a.75.75 0 0 1 0 1.5h-4.5a.75.75 0 0 1 0-1.5ZM3 4.75A.75.75 0 0 1 3.75 4h.5a.75.75 0 0 1 0 1.5h-.5A.75.75 0 0 1 3 4.75ZM3.75 10h.5a.75.75 0 0 1 0 1.5h-.5a.75.75 0 0 1 0-1.5Z"/></svg><div style="position:absolute;left:50px;top:572.0px;height:20px;line-height:20px;font-size:14px;color:#e6e8eb;font-weight:normal;white-space:nowrap;">Runners</div><svg style="position:absolute;left:26px;top:607px;" width="16" height="16" viewBox="0 0 16 16"><path fill="#a0a6ae" d="M8 1.5a6.5 6.5 0 1 0 6.016 4.035.75.75 0 0 1 1.388-.57 8 8 0 1 1-4.37-4.37.75.75 0 0 1-.569 1.389A6.473 6.473 0 0 0 8 1.5Zm6.28.22a.75.75 0 0 1 0 1.06l-4.063 4.064a2.5 2.5 0 1 1-1.06-1.06L13.22 1.72a.75.75 0 0 1 1.06 0ZM8 7a1 1 0 1 0 0 2 1 1 0 0 0 0-2Z"/></svg><div style="position:absolute;left:50px;top:604.0px;height:20px;line-height:20px;font-size:14px;color:#e6e8eb;font-weight:normal;white-space:nowrap;">Usage metrics</div><svg style="position:absolute;left:297px;top:607px;" width="16" height="16" viewBox="0 0 16 16"><path fill="#a0a6ae" d="M4.53 4.75A.75.75 0 0 1 5.28 4h6.01a.75.75 0 0 1 .75.75v6.01a.75.75 0 0 1-1.5 0v-4.2l-5.26 5.27a.749.749 0 0 1-1.275-.326.749.749 0 0 1 .215-.734L9.48 5.5h-4.2a.75.75 0 0 1-.75-.75Z"/></svg><svg style="position:absolute;left:26px;top:639px;" width="16" height="16" viewBox="0 0 16 16"><path fill="#a0a6ae" d="M8 1.5a6.5 6.5 0 1 0 6.016 4.035.75.75 0 0 1 1.388-.57 8 8 0 1 1-4.37-4.37.75.75 0 0 1-.569 1.389A6.473 6.473 0 0 0 8 1.5Zm6.28.22a.75.75 0 0 1 0 1.06l-4.063 4.064a2.5 2.5 0 1 1-1.06-1.06L13.22 1.72a.75.75 0 0 1 1.06 0ZM8 7a1 1 0 1 0 0 2 1 1 0 0 0 0-2Z"/></svg><div style="position:absolute;left:50px;top:636.0px;height:20px;line-height:20px;font-size:14px;color:#e6e8eb;font-weight:normal;white-space:nowrap;">Performance metrics</div><svg style="position:absolute;left:297px;top:639px;" width="16" height="16" viewBox="0 0 16 16"><path fill="#a0a6ae" d="M4.53 4.75A.75.75 0 0 1 5.28 4h6.01a.75.75 0 0 1 .75.75v6.01a.75.75 0 0 1-1.5 0v-4.2l-5.26 5.27a.749.749 0 0 1-1.275-.326.749.749 0 0 1 .215-.734L9.48 5.5h-4.2a.75.75 0 0 1-.75-.75Z"/></svg><div style="position:absolute;left:362px;top:142.0px;height:30px;line-height:30px;font-size:20px;color:#f0f6fc;font-weight:normal;white-space:nowrap;">All workflows</div><div style="position:absolute;left:362px;top:173.0px;height:20px;line-height:20px;font-size:14px;color:#a0a6ae;font-weight:normal;white-space:nowrap;">Showing runs from all workflows</div><div style="position:absolute;left:1342px;top:141px;width:300px;height:32px;box-sizing:border-box;border:1px solid #3d3f42;border-radius:6px;background:#151515"></div><svg style="position:absolute;left:1350px;top:149px;" width="16" height="16" viewBox="0 0 16 16"><path fill="#a0a6ae" d="M10.68 11.74a6 6 0 0 1-7.922-8.982 6 6 0 0 1 8.982 7.922l3.04 3.04a.749.749 0 0 1-.326 1.275.749.749 0 0 1-.734-.215ZM11.5 7a4.499 4.499 0 1 0-8.997 0A4.499 4.499 0 0 0 11.5 7Z"/></svg><div style="position:absolute;left:1375px;top:147.0px;height:20px;line-height:20px;font-size:14px;color:#a0a6ae;font-weight:normal;white-space:nowrap;">Filter workflow runs</div><div style="position:absolute;left:362px;top:218px;width:1280px;height:900px;box-sizing:border-box;border:1px solid #3b3c3e;border-radius:6px"></div><div style="position:absolute;left:363px;top:219px;width:1278px;height:64px;background:#212224;border-radius:6px 6px 0 0"></div><div style="position:absolute;left:363px;top:283px;width:1278px;height:1px;background:#3b3c3e"></div><div style="position:absolute;left:379px;top:241.0px;height:20px;line-height:20px;font-size:14px;color:#f0f6fc;font-weight:bold;white-space:nowrap;">660 workflow runs</div><div style="position:absolute;left:1317px;top:240.0px;height:20px;line-height:20px;font-size:14px;color:#a0a6ae;font-weight:normal;white-space:nowrap;">Event</div><svg style="position:absolute;left:1357px;top:243px;" width="16" height="16" viewBox="0 0 16 16"><path fill="#a0a6ae" d="m4.427 7.427 3.396 3.396a.25.25 0 0 0 .354 0l3.396-3.396A.25.25 0 0 0 11.396 7H4.604a.25.25 0 0 0-.177.427Z"/></svg><div style="position:absolute;left:1395px;top:240.0px;height:20px;line-height:20px;font-size:14px;color:#a0a6ae;font-weight:normal;white-space:nowrap;">Status</div><svg style="position:absolute;left:1439px;top:243px;" width="16" height="16" viewBox="0 0 16 16"><path fill="#a0a6ae" d="m4.427 7.427 3.396 3.396a.25.25 0 0 0 .354 0l3.396-3.396A.25.25 0 0 0 11.396 7H4.604a.25.25 0 0 0-.177.427Z"/></svg><div style="position:absolute;left:1477px;top:240.0px;height:20px;line-height:20px;font-size:14px;color:#a0a6ae;font-weight:normal;white-space:nowrap;">Branch</div><svg style="position:absolute;left:1525px;top:243px;" width="16" height="16" viewBox="0 0 16 16"><path fill="#a0a6ae" d="m4.427 7.427 3.396 3.396a.25.25 0 0 0 .354 0l3.396-3.396A.25.25 0 0 0 11.396 7H4.604a.25.25 0 0 0-.177.427Z"/></svg><div style="position:absolute;left:1563px;top:240.0px;height:20px;line-height:20px;font-size:14px;color:#a0a6ae;font-weight:normal;white-space:nowrap;">Actor</div><svg style="position:absolute;left:1600px;top:243px;" width="16" height="16" viewBox="0 0 16 16"><path fill="#a0a6ae" d="m4.427 7.427 3.396 3.396a.25.25 0 0 0 .354 0l3.396-3.396A.25.25 0 0 0 11.396 7H4.604a.25.25 0 0 0-.177.427Z"/></svg><svg style="position:absolute;left:379px;top:304px;" width="16" height="16" viewBox="0 0 16 16"><path fill="#f0605d" d="M2.343 13.657A8 8 0 1 1 13.658 2.343 8 8 0 0 1 2.343 13.657ZM6.03 4.97a.751.751 0 0 0-1.042.018.751.751 0 0 0-.018 1.042L6.940 8 4.97 9.970a.749.749 0 0 0 .326 1.275.749.749 0 0 0 .734-.215L8 9.060l1.97 1.97a.749.749 0 0 0 1.275-.326.749.749 0 0 0-.215-.734L9.060 8l1.97-1.97a.749.749 0 0 0-.326-1.275.749.749 0 0 0-.734.215L8 6.940Z"/></svg><div style="position:absolute;left:403px;top:301.0px;height:22px;line-height:22px;font-size:16px;color:#f0f6fc;font-weight:bold;white-space:nowrap;">delete: test-99</div><div style="position:absolute;left:403px;top:328.5px;height:18px;line-height:18px;font-size:12px;color:#a0a6ae;font-weight:normal;white-space:nowrap;"><b style="font-weight:bold">.github/workflows/evaluate-changes.yaml</b> #620: Commit <span style="border-bottom:1px solid #a0a6ae">9fe80bb</span> pushed by fs-bs-firestarter-dev-test <span style="display:inline-block;border:1px solid #3d3f42;border-radius:10px;padding:0 6px;line-height:16px">bot</span></div><div style="position:absolute;left:1018px;top:315px;height:18px;line-height:18px;padding:0 6px;border-radius:6px;background:#16212d;color:#74a0ea;font-family:'Liberation Mono',monospace;font-size:12px;white-space:nowrap">automated/test-99-0</div><svg style="position:absolute;left:1417px;top:307px;" width="16" height="16" viewBox="0 0 16 16"><path fill="#a0a6ae" d="M4.75 0a.75.75 0 0 1 .75.75V2h5V.75a.75.75 0 0 1 1.5 0V2h1.25c.966 0 1.75.784 1.75 1.75v10.5A1.75 1.75 0 0 1 13.25 16H2.75A1.75 1.75 0 0 1 1 14.25V3.75C1 2.784 1.784 2 2.75 2H4V.75A.75.75 0 0 1 4.75 0ZM2.5 7.5v6.75c0 .138.112.25.25.25h10.5a.25.25 0 0 0 .25-.25V7.5Zm10.75-4H2.75a.25.25 0 0 0-.25.25V6h11V3.75a.25.25 0 0 0-.25-.25Z"/></svg><div style="position:absolute;left:1437px;top:306.5px;height:18px;line-height:18px;font-size:12px;color:#a0a6ae;font-weight:normal;white-space:nowrap;">4 hours ago</div><svg style="position:absolute;left:1417px;top:328px;" width="16" height="16" viewBox="0 0 16 16"><path fill="#a0a6ae" d="M5.75.75A.75.75 0 0 1 6.5 0h3a.75.75 0 0 1 0 1.5h-.75v1l-.001.041a6.724 6.724 0 0 1 3.464 1.435l.007-.006.75-.75a.749.749 0 0 1 1.275.326.749.749 0 0 1-.215.734l-.75.75-.006.007a6.75 6.75 0 1 1-10.548 0L2.72 5.03l-.75-.75a.751.751 0 0 1 .018-1.042.751.751 0 0 1 1.042-.018l.75.75.007.006A6.72 6.72 0 0 1 7.25 2.541V1.5H6.5a.75.75 0 0 1-.75-.75ZM8 14.5a5.25 5.25 0 1 0-.001-10.501A5.25 5.25 0 0 0 8 14.5Zm.389-6.7 1.33-1.33a.75.75 0 1 1 1.061 1.06L9.450 8.861A1.503 1.503 0 0 1 8 10.75a1.499 1.499 0 1 1 .389-2.950Z"/></svg><div style="position:absolute;left:1437px;top:327.5px;height:18px;line-height:18px;font-size:12px;color:#a0a6ae;font-weight:normal;white-space:nowrap;font-style:italic">Failure</div><svg style="position:absolute;left:1605px;top:315px;" width="16" height="16" viewBox="0 0 16 16"><path fill="#c4c7cb" d="M8 9a1.5 1.5 0 1 0 0-3 1.5 1.5 0 0 0 0 3ZM1.5 9a1.5 1.5 0 1 0 0-3 1.5 1.5 0 0 0 0 3Zm13 0a1.5 1.5 0 1 0 0-3 1.5 1.5 0 0 0 0 3Z"/></svg><div style="position:absolute;left:363px;top:363px;width:1278px;height:1px;background:#3b3c3e"></div><svg style="position:absolute;left:379px;top:384px;" width="16" height="16" viewBox="0 0 16 16"><path fill="#56ab62" d="M8 16A8 8 0 1 1 8 0a8 8 0 0 1 0 16Zm3.78-9.72a.751.751 0 0 0-.018-1.042.751.751 0 0 0-1.042-.018L6.750 9.190 5.28 7.72a.751.751 0 0 0-1.042.018.751.751 0 0 0-.018 1.042l2 2a.75.75 0 0 0 1.06 0Z"/></svg><div style="position:absolute;left:403px;top:381.0px;height:22px;line-height:22px;font-size:16px;color:#f0f6fc;font-weight:bold;white-space:nowrap;">Deleting TFWorkspace claim test-99</div><div style="position:absolute;left:403px;top:407.5px;height:18px;line-height:18px;font-size:12px;color:#a0a6ae;font-weight:normal;white-space:nowrap;"><b style="font-weight:bold">Infra claim: delete</b> #8: Manually run by juanjosevazquezgil</div><div style="position:absolute;left:1018px;top:394px;height:18px;line-height:18px;padding:0 6px;border-radius:6px;background:#16212d;color:#74a0ea;font-family:'Liberation Mono',monospace;font-size:12px;white-space:nowrap">main</div><svg style="position:absolute;left:1417px;top:386px;" width="16" height="16" viewBox="0 0 16 16"><path fill="#a0a6ae" d="M4.75 0a.75.75 0 0 1 .75.75V2h5V.75a.75.75 0 0 1 1.5 0V2h1.25c.966 0 1.75.784 1.75 1.75v10.5A1.75 1.75 0 0 1 13.25 16H2.75A1.75 1.75 0 0 1 1 14.25V3.75C1 2.784 1.784 2 2.75 2H4V.75A.75.75 0 0 1 4.75 0ZM2.5 7.5v6.75c0 .138.112.25.25.25h10.5a.25.25 0 0 0 .25-.25V7.5Zm10.75-4H2.75a.25.25 0 0 0-.25.25V6h11V3.75a.25.25 0 0 0-.25-.25Z"/></svg><div style="position:absolute;left:1437px;top:385.5px;height:18px;line-height:18px;font-size:12px;color:#a0a6ae;font-weight:normal;white-space:nowrap;">4 hours ago</div><svg style="position:absolute;left:1417px;top:407px;" width="16" height="16" viewBox="0 0 16 16"><path fill="#a0a6ae" d="M5.75.75A.75.75 0 0 1 6.5 0h3a.75.75 0 0 1 0 1.5h-.75v1l-.001.041a6.724 6.724 0 0 1 3.464 1.435l.007-.006.75-.75a.749.749 0 0 1 1.275.326.749.749 0 0 1-.215.734l-.75.75-.006.007a6.75 6.75 0 1 1-10.548 0L2.72 5.03l-.75-.75a.751.751 0 0 1 .018-1.042.751.751 0 0 1 1.042-.018l.75.75.007.006A6.72 6.72 0 0 1 7.25 2.541V1.5H6.5a.75.75 0 0 1-.75-.75ZM8 14.5a5.25 5.25 0 1 0-.001-10.501A5.25 5.25 0 0 0 8 14.5Zm.389-6.7 1.33-1.33a.75.75 0 1 1 1.061 1.06L9.450 8.861A1.503 1.503 0 0 1 8 10.75a1.499 1.499 0 1 1 .389-2.950Z"/></svg><div style="position:absolute;left:1437px;top:406.5px;height:18px;line-height:18px;font-size:12px;color:#a0a6ae;font-weight:normal;white-space:nowrap;"><span style="border-bottom:1px dotted #55595e">19s</span></div><svg style="position:absolute;left:1605px;top:394px;" width="16" height="16" viewBox="0 0 16 16"><path fill="#c4c7cb" d="M8 9a1.5 1.5 0 1 0 0-3 1.5 1.5 0 0 0 0 3ZM1.5 9a1.5 1.5 0 1 0 0-3 1.5 1.5 0 0 0 0 3Zm13 0a1.5 1.5 0 1 0 0-3 1.5 1.5 0 0 0 0 3Z"/></svg><div style="position:absolute;left:363px;top:441px;width:1278px;height:1px;background:#3b3c3e"></div><svg style="position:absolute;left:379px;top:462px;" width="16" height="16" viewBox="0 0 16 16"><path fill="#f0605d" d="M2.343 13.657A8 8 0 1 1 13.658 2.343 8 8 0 0 1 2.343 13.657ZM6.03 4.97a.751.751 0 0 0-1.042.018.751.751 0 0 0-.018 1.042L6.940 8 4.97 9.970a.749.749 0 0 0 .326 1.275.749.749 0 0 0 .734-.215L8 9.060l1.97 1.97a.749.749 0 0 0 1.275-.326.749.749 0 0 0-.215-.734L9.060 8l1.97-1.97a.749.749 0 0 0-.326-1.275.749.749 0 0 0-.734.215L8 6.940Z"/></svg><div style="position:absolute;left:403px;top:459.0px;height:22px;line-height:22px;font-size:16px;color:#f0f6fc;font-weight:bold;white-space:nowrap;">Deleting TFWorkspace claim test-99</div><div style="position:absolute;left:403px;top:485.5px;height:18px;line-height:18px;font-size:12px;color:#a0a6ae;font-weight:normal;white-space:nowrap;"><b style="font-weight:bold">Infra claim: delete</b> #7: Manually run by juanjosevazquezgil</div><div style="position:absolute;left:1018px;top:472px;height:18px;line-height:18px;padding:0 6px;border-radius:6px;background:#16212d;color:#74a0ea;font-family:'Liberation Mono',monospace;font-size:12px;white-space:nowrap">main</div><svg style="position:absolute;left:1417px;top:464px;" width="16" height="16" viewBox="0 0 16 16"><path fill="#a0a6ae" d="M4.75 0a.75.75 0 0 1 .75.75V2h5V.75a.75.75 0 0 1 1.5 0V2h1.25c.966 0 1.75.784 1.75 1.75v10.5A1.75 1.75 0 0 1 13.25 16H2.75A1.75 1.75 0 0 1 1 14.25V3.75C1 2.784 1.784 2 2.75 2H4V.75A.75.75 0 0 1 4.75 0ZM2.5 7.5v6.75c0 .138.112.25.25.25h10.5a.25.25 0 0 0 .25-.25V7.5Zm10.75-4H2.75a.25.25 0 0 0-.25.25V6h11V3.75a.25.25 0 0 0-.25-.25Z"/></svg><div style="position:absolute;left:1437px;top:463.5px;height:18px;line-height:18px;font-size:12px;color:#a0a6ae;font-weight:normal;white-space:nowrap;">4 hours ago</div><svg style="position:absolute;left:1417px;top:485px;" width="16" height="16" viewBox="0 0 16 16"><path fill="#a0a6ae" d="M5.75.75A.75.75 0 0 1 6.5 0h3a.75.75 0 0 1 0 1.5h-.75v1l-.001.041a6.724 6.724 0 0 1 3.464 1.435l.007-.006.75-.75a.749.749 0 0 1 1.275.326.749.749 0 0 1-.215.734l-.75.75-.006.007a6.75 6.75 0 1 1-10.548 0L2.72 5.03l-.75-.75a.751.751 0 0 1 .018-1.042.751.751 0 0 1 1.042-.018l.75.75.007.006A6.72 6.72 0 0 1 7.25 2.541V1.5H6.5a.75.75 0 0 1-.75-.75ZM8 14.5a5.25 5.25 0 1 0-.001-10.501A5.25 5.25 0 0 0 8 14.5Zm.389-6.7 1.33-1.33a.75.75 0 1 1 1.061 1.06L9.450 8.861A1.503 1.503 0 0 1 8 10.75a1.499 1.499 0 1 1 .389-2.950Z"/></svg><div style="position:absolute;left:1437px;top:484.5px;height:18px;line-height:18px;font-size:12px;color:#a0a6ae;font-weight:normal;white-space:nowrap;"><span style="border-bottom:1px dotted #55595e">16s</span></div><svg style="position:absolute;left:1605px;top:472px;" width="16" height="16" viewBox="0 0 16 16"><path fill="#c4c7cb" d="M8 9a1.5 1.5 0 1 0 0-3 1.5 1.5 0 0 0 0 3ZM1.5 9a1.5 1.5 0 1 0 0-3 1.5 1.5 0 0 0 0 3Zm13 0a1.5 1.5 0 1 0 0-3 1.5 1.5 0 0 0 0 3Z"/></svg><div style="position:absolute;left:363px;top:519px;width:1278px;height:1px;background:#3b3c3e"></div><svg style="position:absolute;left:379px;top:540px;" width="16" height="16" viewBox="0 0 16 16"><path fill="#56ab62" d="M8 16A8 8 0 1 1 8 0a8 8 0 0 1 0 16Zm3.78-9.72a.751.751 0 0 0-.018-1.042.751.751 0 0 0-1.042-.018L6.750 9.190 5.28 7.72a.751.751 0 0 0-1.042.018.751.751 0 0 0-.018 1.042l2 2a.75.75 0 0 0 1.06 0Z"/></svg><div style="position:absolute;left:403px;top:537.0px;height:22px;line-height:22px;font-size:16px;color:#f0f6fc;font-weight:bold;white-space:nowrap;">Hydrating TFWorkspace claim test-99</div><div style="position:absolute;left:403px;top:563.5px;height:18px;line-height:18px;font-size:12px;color:#a0a6ae;font-weight:normal;white-space:nowrap;"><b style="font-weight:bold">Infra claim: hydrate</b> #13: Manually run by juanjosevazquezgil</div><div style="position:absolute;left:1018px;top:550px;height:18px;line-height:18px;padding:0 6px;border-radius:6px;background:#16212d;color:#74a0ea;font-family:'Liberation Mono',monospace;font-size:12px;white-space:nowrap">main</div><svg style="position:absolute;left:1417px;top:542px;" width="16" height="16" viewBox="0 0 16 16"><path fill="#a0a6ae" d="M4.75 0a.75.75 0 0 1 .75.75V2h5V.75a.75.75 0 0 1 1.5 0V2h1.25c.966 0 1.75.784 1.75 1.75v10.5A1.75 1.75 0 0 1 13.25 16H2.75A1.75 1.75 0 0 1 1 14.25V3.75C1 2.784 1.784 2 2.75 2H4V.75A.75.75 0 0 1 4.75 0ZM2.5 7.5v6.75c0 .138.112.25.25.25h10.5a.25.25 0 0 0 .25-.25V7.5Zm10.75-4H2.75a.25.25 0 0 0-.25.25V6h11V3.75a.25.25 0 0 0-.25-.25Z"/></svg><div style="position:absolute;left:1437px;top:541.5px;height:18px;line-height:18px;font-size:12px;color:#a0a6ae;font-weight:normal;white-space:nowrap;">4 hours ago</div><svg style="position:absolute;left:1417px;top:563px;" width="16" height="16" viewBox="0 0 16 16"><path fill="#a0a6ae" d="M5.75.75A.75.75 0 0 1 6.5 0h3a.75.75 0 0 1 0 1.5h-.75v1l-.001.041a6.724 6.724 0 0 1 3.464 1.435l.007-.006.75-.75a.749.749 0 0 1 1.275.326.749.749 0 0 1-.215.734l-.75.75-.006.007a6.75 6.75 0 1 1-10.548 0L2.72 5.03l-.75-.75a.751.751 0 0 1 .018-1.042.751.751 0 0 1 1.042-.018l.75.75.007.006A6.72 6.72 0 0 1 7.25 2.541V1.5H6.5a.75.75 0 0 1-.75-.75ZM8 14.5a5.25 5.25 0 1 0-.001-10.501A5.25 5.25 0 0 0 8 14.5Zm.389-6.7 1.33-1.33a.75.75 0 1 1 1.061 1.06L9.450 8.861A1.503 1.503 0 0 1 8 10.75a1.499 1.499 0 1 1 .389-2.950Z"/></svg><div style="position:absolute;left:1437px;top:562.5px;height:18px;line-height:18px;font-size:12px;color:#a0a6ae;font-weight:normal;white-space:nowrap;"><span style="border-bottom:1px dotted #55595e">26s</span></div><svg style="position:absolute;left:1605px;top:550px;" width="16" height="16" viewBox="0 0 16 16"><path fill="#c4c7cb" d="M8 9a1.5 1.5 0 1 0 0-3 1.5 1.5 0 0 0 0 3ZM1.5 9a1.5 1.5 0 1 0 0-3 1.5 1.5 0 0 0 0 3Zm13 0a1.5 1.5 0 1 0 0-3 1.5 1.5 0 0 0 0 3Z"/></svg><div style="position:absolute;left:363px;top:597px;width:1278px;height:1px;background:#3b3c3e"></div><svg style="position:absolute;left:379px;top:618px;" width="16" height="16" viewBox="0 0 16 16"><path fill="#f0605d" d="M2.343 13.657A8 8 0 1 1 13.658 2.343 8 8 0 0 1 2.343 13.657ZM6.03 4.97a.751.751 0 0 0-1.042.018.751.751 0 0 0-.018 1.042L6.940 8 4.97 9.970a.749.749 0 0 0 .326 1.275.749.749 0 0 0 .734-.215L8 9.060l1.97 1.97a.749.749 0 0 0 1.275-.326.749.749 0 0 0-.215-.734L9.060 8l1.97-1.97a.749.749 0 0 0-.326-1.275.749.749 0 0 0-.734.215L8 6.940Z"/></svg><div style="position:absolute;left:403px;top:615.0px;height:22px;line-height:22px;font-size:16px;color:#f0f6fc;font-weight:bold;white-space:nowrap;">Hydrating TFWorkspace claim test-100</div><div style="position:absolute;left:403px;top:641.5px;height:18px;line-height:18px;font-size:12px;color:#a0a6ae;font-weight:normal;white-space:nowrap;"><b style="font-weight:bold">Infra claim: hydrate</b> #12: Manually run by juanjosevazquezgil</div><div style="position:absolute;left:1018px;top:628px;height:18px;line-height:18px;padding:0 6px;border-radius:6px;background:#16212d;color:#74a0ea;font-family:'Liberation Mono',monospace;font-size:12px;white-space:nowrap">juanjosevazquezgil-patch-1</div><svg style="position:absolute;left:1417px;top:620px;" width="16" height="16" viewBox="0 0 16 16"><path fill="#a0a6ae" d="M4.75 0a.75.75 0 0 1 .75.75V2h5V.75a.75.75 0 0 1 1.5 0V2h1.25c.966 0 1.75.784 1.75 1.75v10.5A1.75 1.75 0 0 1 13.25 16H2.75A1.75 1.75 0 0 1 1 14.25V3.75C1 2.784 1.784 2 2.75 2H4V.75A.75.75 0 0 1 4.75 0ZM2.5 7.5v6.75c0 .138.112.25.25.25h10.5a.25.25 0 0 0 .25-.25V7.5Zm10.75-4H2.75a.25.25 0 0 0-.25.25V6h11V3.75a.25.25 0 0 0-.25-.25Z"/></svg><div style="position:absolute;left:1437px;top:619.5px;height:18px;line-height:18px;font-size:12px;color:#a0a6ae;font-weight:normal;white-space:nowrap;">4 hours ago</div><svg style="position:absolute;left:1417px;top:641px;" width="16" height="16" viewBox="0 0 16 16"><path fill="#a0a6ae" d="M5.75.75A.75.75 0 0 1 6.5 0h3a.75.75 0 0 1 0 1.5h-.75v1l-.001.041a6.724 6.724 0 0 1 3.464 1.435l.007-.006.75-.75a.749.749 0 0 1 1.275.326.749.749 0 0 1-.215.734l-.75.75-.006.007a6.75 6.75 0 1 1-10.548 0L2.72 5.03l-.75-.75a.751.751 0 0 1 .018-1.042.751.751 0 0 1 1.042-.018l.75.75.007.006A6.72 6.72 0 0 1 7.25 2.541V1.5H6.5a.75.75 0 0 1-.75-.75ZM8 14.5a5.25 5.25 0 1 0-.001-10.501A5.25 5.25 0 0 0 8 14.5Zm.389-6.7 1.33-1.33a.75.75 0 1 1 1.061 1.06L9.450 8.861A1.503 1.503 0 0 1 8 10.75a1.499 1.499 0 1 1 .389-2.950Z"/></svg><div style="position:absolute;left:1437px;top:640.5px;height:18px;line-height:18px;font-size:12px;color:#a0a6ae;font-weight:normal;white-space:nowrap;"><span style="border-bottom:1px dotted #55595e">25s</span></div><svg style="position:absolute;left:1605px;top:628px;" width="16" height="16" viewBox="0 0 16 16"><path fill="#c4c7cb" d="M8 9a1.5 1.5 0 1 0 0-3 1.5 1.5 0 0 0 0 3ZM1.5 9a1.5 1.5 0 1 0 0-3 1.5 1.5 0 0 0 0 3Zm13 0a1.5 1.5 0 1 0 0-3 1.5 1.5 0 0 0 0 3Z"/></svg><div style="position:absolute;left:363px;top:675px;width:1278px;height:1px;background:#3b3c3e"></div><svg style="position:absolute;left:379px;top:696px;" width="16" height="16" viewBox="0 0 16 16"><path fill="#f0605d" d="M2.343 13.657A8 8 0 1 1 13.658 2.343 8 8 0 0 1 2.343 13.657ZM6.03 4.97a.751.751 0 0 0-1.042.018.751.751 0 0 0-.018 1.042L6.940 8 4.97 9.970a.749.749 0 0 0 .326 1.275.749.749 0 0 0 .734-.215L8 9.060l1.97 1.97a.749.749 0 0 0 1.275-.326.749.749 0 0 0-.215-.734L9.060 8l1.97-1.97a.749.749 0 0 0-.326-1.275.749.749 0 0 0-.734.215L8 6.940Z"/></svg><div style="position:absolute;left:403px;top:693.0px;height:22px;line-height:22px;font-size:16px;color:#f0f6fc;font-weight:bold;white-space:nowrap;">Create test-100.yaml</div><div style="position:absolute;left:403px;top:719.5px;height:18px;line-height:18px;font-size:12px;color:#a0a6ae;font-weight:normal;white-space:nowrap;"><b style="font-weight:bold">.github/workflows/evaluate-changes.yaml</b> #619: Commit <span style="border-bottom:1px solid #a0a6ae">a5cb0db</span> pushed by juanjosevazquezgil</div><div style="position:absolute;left:1018px;top:706px;height:18px;line-height:18px;padding:0 6px;border-radius:6px;background:#16212d;color:#74a0ea;font-family:'Liberation Mono',monospace;font-size:12px;white-space:nowrap">juanjosevazquezgil-patch-1</div><svg style="position:absolute;left:1417px;top:698px;" width="16" height="16" viewBox="0 0 16 16"><path fill="#a0a6ae" d="M4.75 0a.75.75 0 0 1 .75.75V2h5V.75a.75.75 0 0 1 1.5 0V2h1.25c.966 0 1.75.784 1.75 1.75v10.5A1.75 1.75 0 0 1 13.25 16H2.75A1.75 1.75 0 0 1 1 14.25V3.75C1 2.784 1.784 2 2.75 2H4V.75A.75.75 0 0 1 4.75 0ZM2.5 7.5v6.75c0 .138.112.25.25.25h10.5a.25.25 0 0 0 .25-.25V7.5Zm10.75-4H2.75a.25.25 0 0 0-.25.25V6h11V3.75a.25.25 0 0 0-.25-.25Z"/></svg><div style="position:absolute;left:1437px;top:697.5px;height:18px;line-height:18px;font-size:12px;color:#a0a6ae;font-weight:normal;white-space:nowrap;">4 hours ago</div><svg style="position:absolute;left:1417px;top:719px;" width="16" height="16" viewBox="0 0 16 16"><path fill="#a0a6ae" d="M5.75.75A.75.75 0 0 1 6.5 0h3a.75.75 0 0 1 0 1.5h-.75v1l-.001.041a6.724 6.724 0 0 1 3.464 1.435l.007-.006.75-.75a.749.749 0 0 1 1.275.326.749.749 0 0 1-.215.734l-.75.75-.006.007a6.75 6.75 0 1 1-10.548 0L2.72 5.03l-.75-.75a.751.751 0 0 1 .018-1.042.751.751 0 0 1 1.042-.018l.75.75.007.006A6.72 6.72 0 0 1 7.25 2.541V1.5H6.5a.75.75 0 0 1-.75-.75ZM8 14.5a5.25 5.25 0 1 0-.001-10.501A5.25 5.25 0 0 0 8 14.5Zm.389-6.7 1.33-1.33a.75.75 0 1 1 1.061 1.06L9.450 8.861A1.503 1.503 0 0 1 8 10.75a1.499 1.499 0 1 1 .389-2.950Z"/></svg><div style="position:absolute;left:1437px;top:718.5px;height:18px;line-height:18px;font-size:12px;color:#a0a6ae;font-weight:normal;white-space:nowrap;font-style:italic">Failure</div><svg style="position:absolute;left:1605px;top:706px;" width="16" height="16" viewBox="0 0 16 16"><path fill="#c4c7cb" d="M8 9a1.5 1.5 0 1 0 0-3 1.5 1.5 0 0 0 0 3ZM1.5 9a1.5 1.5 0 1 0 0-3 1.5 1.5 0 0 0 0 3Zm13 0a1.5 1.5 0 1 0 0-3 1.5 1.5 0 0 0 0 3Z"/></svg><div style="position:absolute;left:363px;top:753px;width:1278px;height:1px;background:#3b3c3e"></div><svg style="position:absolute;left:379px;top:774px;" width="16" height="16" viewBox="0 0 16 16"><path fill="#a0a6ae" d="M4.47.22A.749.749 0 0 1 5 0h6c.199 0 .389.079.53.22l4.25 4.25c.141.14.22.331.22.53v6a.749.749 0 0 1-.22.53l-4.25 4.25A.749.749 0 0 1 11 16H5a.749.749 0 0 1-.53-.22L.22 11.53A.749.749 0 0 1 0 11V5c0-.199.079-.389.22-.53Zm.84 1.28L1.5 5.31v5.38l3.81 3.81h5.38l3.81-3.81V5.31L10.69 1.5ZM8 4a.75.75 0 0 1 .75.75v3.5a.75.75 0 0 1-1.5 0v-3.5A.75.75 0 0 1 8 4Zm0 8a1 1 0 1 1 0-2 1 1 0 0 1 0 2Z"/></svg><div style="position:absolute;left:403px;top:771.0px;height:22px;line-height:22px;font-size:16px;color:#f0f6fc;font-weight:bold;white-space:nowrap;">Hydrating TFWorkspace claim test-99</div><div style="position:absolute;left:403px;top:797.5px;height:18px;line-height:18px;font-size:12px;color:#a0a6ae;font-weight:normal;white-space:nowrap;"><b style="font-weight:bold">Infra claim: hydrate</b> #11: Manually run by juanjosevazquezgil</div><div style="position:absolute;left:1018px;top:784px;height:18px;line-height:18px;padding:0 6px;border-radius:6px;background:#16212d;color:#74a0ea;font-family:'Liberation Mono',monospace;font-size:12px;white-space:nowrap">main</div><svg style="position:absolute;left:1417px;top:776px;" width="16" height="16" viewBox="0 0 16 16"><path fill="#a0a6ae" d="M4.75 0a.75.75 0 0 1 .75.75V2h5V.75a.75.75 0 0 1 1.5 0V2h1.25c.966 0 1.75.784 1.75 1.75v10.5A1.75 1.75 0 0 1 13.25 16H2.75A1.75 1.75 0 0 1 1 14.25V3.75C1 2.784 1.784 2 2.75 2H4V.75A.75.75 0 0 1 4.75 0ZM2.5 7.5v6.75c0 .138.112.25.25.25h10.5a.25.25 0 0 0 .25-.25V7.5Zm10.75-4H2.75a.25.25 0 0 0-.25.25V6h11V3.75a.25.25 0 0 0-.25-.25Z"/></svg><div style="position:absolute;left:1437px;top:775.5px;height:18px;line-height:18px;font-size:12px;color:#a0a6ae;font-weight:normal;white-space:nowrap;">4 hours ago</div><svg style="position:absolute;left:1417px;top:797px;" width="16" height="16" viewBox="0 0 16 16"><path fill="#a0a6ae" d="M5.75.75A.75.75 0 0 1 6.5 0h3a.75.75 0 0 1 0 1.5h-.75v1l-.001.041a6.724 6.724 0 0 1 3.464 1.435l.007-.006.75-.75a.749.749 0 0 1 1.275.326.749.749 0 0 1-.215.734l-.75.75-.006.007a6.75 6.75 0 1 1-10.548 0L2.72 5.03l-.75-.75a.751.751 0 0 1 .018-1.042.751.751 0 0 1 1.042-.018l.75.75.007.006A6.72 6.72 0 0 1 7.25 2.541V1.5H6.5a.75.75 0 0 1-.75-.75ZM8 14.5a5.25 5.25 0 1 0-.001-10.501A5.25 5.25 0 0 0 8 14.5Zm.389-6.7 1.33-1.33a.75.75 0 1 1 1.061 1.06L9.450 8.861A1.503 1.503 0 0 1 8 10.75a1.499 1.499 0 1 1 .389-2.950Z"/></svg><div style="position:absolute;left:1437px;top:796.5px;height:18px;line-height:18px;font-size:12px;color:#a0a6ae;font-weight:normal;white-space:nowrap;"><span style="border-bottom:1px dotted #55595e">27s</span></div><svg style="position:absolute;left:1605px;top:784px;" width="16" height="16" viewBox="0 0 16 16"><path fill="#c4c7cb" d="M8 9a1.5 1.5 0 1 0 0-3 1.5 1.5 0 0 0 0 3ZM1.5 9a1.5 1.5 0 1 0 0-3 1.5 1.5 0 0 0 0 3Zm13 0a1.5 1.5 0 1 0 0-3 1.5 1.5 0 0 0 0 3Z"/></svg><div style="position:absolute;left:363px;top:831px;width:1278px;height:1px;background:#3b3c3e"></div><svg style="position:absolute;left:379px;top:852px;" width="16" height="16" viewBox="0 0 16 16"><path fill="#f0605d" d="M2.343 13.657A8 8 0 1 1 13.658 2.343 8 8 0 0 1 2.343 13.657ZM6.03 4.97a.751.751 0 0 0-1.042.018.751.751 0 0 0-.018 1.042L6.940 8 4.97 9.970a.749.749 0 0 0 .326 1.275.749.749 0 0 0 .734-.215L8 9.060l1.97 1.97a.749.749 0 0 0 1.275-.326.749.749 0 0 0-.215-.734L9.060 8l1.97-1.97a.749.749 0 0 0-.326-1.275.749.749 0 0 0-.734.215L8 6.940Z"/></svg><div style="position:absolute;left:403px;top:849.0px;height:22px;line-height:22px;font-size:16px;color:#f0f6fc;font-weight:bold;white-space:nowrap;">Merge pull request #298 from firestartr-test/juanjosevazquezgil-patch-1</div><div style="position:absolute;left:403px;top:875.5px;height:18px;line-height:18px;font-size:12px;color:#a0a6ae;font-weight:normal;white-space:nowrap;"><b style="font-weight:bold">.github/workflows/evaluate-changes.yaml</b> #618: Commit <span style="border-bottom:1px solid #a0a6ae">1f67892</span> pushed by juanjosevazquezgil</div><div style="position:absolute;left:1018px;top:862px;height:18px;line-height:18px;padding:0 6px;border-radius:6px;background:#16212d;color:#74a0ea;font-family:'Liberation Mono',monospace;font-size:12px;white-space:nowrap">main</div><svg style="position:absolute;left:1417px;top:854px;" width="16" height="16" viewBox="0 0 16 16"><path fill="#a0a6ae" d="M4.75 0a.75.75 0 0 1 .75.75V2h5V.75a.75.75 0 0 1 1.5 0V2h1.25c.966 0 1.75.784 1.75 1.75v10.5A1.75 1.75 0 0 1 13.25 16H2.75A1.75 1.75 0 0 1 1 14.25V3.75C1 2.784 1.784 2 2.75 2H4V.75A.75.75 0 0 1 4.75 0ZM2.5 7.5v6.75c0 .138.112.25.25.25h10.5a.25.25 0 0 0 .25-.25V7.5Zm10.75-4H2.75a.25.25 0 0 0-.25.25V6h11V3.75a.25.25 0 0 0-.25-.25Z"/></svg><div style="position:absolute;left:1437px;top:853.5px;height:18px;line-height:18px;font-size:12px;color:#a0a6ae;font-weight:normal;white-space:nowrap;">4 hours ago</div><svg style="position:absolute;left:1417px;top:875px;" width="16" height="16" viewBox="0 0 16 16"><path fill="#a0a6ae" d="M5.75.75A.75.75 0 0 1 6.5 0h3a.75.75 0 0 1 0 1.5h-.75v1l-.001.041a6.724 6.724 0 0 1 3.464 1.435l.007-.006.75-.75a.749.749 0 0 1 1.275.326.749.749 0 0 1-.215.734l-.75.75-.006.007a6.75 6.75 0 1 1-10.548 0L2.72 5.03l-.75-.75a.751.751 0 0 1 .018-1.042.751.751 0 0 1 1.042-.018l.75.75.007.006A6.72 6.72 0 0 1 7.25 2.541V1.5H6.5a.75.75 0 0 1-.75-.75ZM8 14.5a5.25 5.25 0 1 0-.001-10.501A5.25 5.25 0 0 0 8 14.5Zm.389-6.7 1.33-1.33a.75.75 0 1 1 1.061 1.06L9.450 8.861A1.503 1.503 0 0 1 8 10.75a1.499 1.499 0 1 1 .389-2.950Z"/></svg><div style="position:absolute;left:1437px;top:874.5px;height:18px;line-height:18px;font-size:12px;color:#a0a6ae;font-weight:normal;white-space:nowrap;font-style:italic">Failure</div><svg style="position:absolute;left:1605px;top:862px;" width="16" height="16" viewBox="0 0 16 16"><path fill="#c4c7cb" d="M8 9a1.5 1.5 0 1 0 0-3 1.5 1.5 0 0 0 0 3ZM1.5 9a1.5 1.5 0 1 0 0-3 1.5 1.5 0 0 0 0 3Zm13 0a1.5 1.5 0 1 0 0-3 1.5 1.5 0 0 0 0 3Z"/></svg><div style="position:absolute;left:363px;top:909px;width:1278px;height:1px;background:#3b3c3e"></div><svg style="position:absolute;left:379px;top:930px;" width="16" height="16" viewBox="0 0 16 16"><path fill="#f0605d" d="M2.343 13.657A8 8 0 1 1 13.658 2.343 8 8 0 0 1 2.343 13.657ZM6.03 4.97a.751.751 0 0 0-1.042.018.751.751 0 0 0-.018 1.042L6.940 8 4.97 9.970a.749.749 0 0 0 .326 1.275.749.749 0 0 0 .734-.215L8 9.060l1.97 1.97a.749.749 0 0 0 1.275-.326.749.749 0 0 0-.215-.734L9.060 8l1.97-1.97a.749.749 0 0 0-.326-1.275.749.749 0 0 0-.734.215L8 6.940Z"/></svg><div style="position:absolute;left:403px;top:927.0px;height:22px;line-height:22px;font-size:16px;color:#f0f6fc;font-weight:bold;white-space:nowrap;">Create test-99.yaml</div><div style="position:absolute;left:403px;top:953.5px;height:18px;line-height:18px;font-size:12px;color:#a0a6ae;font-weight:normal;white-space:nowrap;"><b style="font-weight:bold">.github/workflows/evaluate-changes.yaml</b> #617: Commit <span style="border-bottom:1px solid #a0a6ae">dba0e58</span> pushed by juanjosevazquezgil</div><div style="position:absolute;left:1018px;top:940px;height:18px;line-height:18px;padding:0 6px;border-radius:6px;background:#16212d;color:#74a0ea;font-family:'Liberation Mono',monospace;font-size:12px;white-space:nowrap">juanjosevazquezgil-patch-1</div><svg style="position:absolute;left:1417px;top:932px;" width="16" height="16" viewBox="0 0 16 16"><path fill="#a0a6ae" d="M4.75 0a.75.75 0 0 1 .75.75V2h5V.75a.75.75 0 0 1 1.5 0V2h1.25c.966 0 1.75.784 1.75 1.75v10.5A1.75 1.75 0 0 1 13.25 16H2.75A1.75 1.75 0 0 1 1 14.25V3.75C1 2.784 1.784 2 2.75 2H4V.75A.75.75 0 0 1 4.75 0ZM2.5 7.5v6.75c0 .138.112.25.25.25h10.5a.25.25 0 0 0 .25-.25V7.5Zm10.75-4H2.75a.25.25 0 0 0-.25.25V6h11V3.75a.25.25 0 0 0-.25-.25Z"/></svg><div style="position:absolute;left:1437px;top:931.5px;height:18px;line-height:18px;font-size:12px;color:#a0a6ae;font-weight:normal;white-space:nowrap;">4 hours ago</div><svg style="position:absolute;left:1417px;top:953px;" width="16" height="16" viewBox="0 0 16 16"><path fill="#a0a6ae" d="M5.75.75A.75.75 0 0 1 6.5 0h3a.75.75 0 0 1 0 1.5h-.75v1l-.001.041a6.724 6.724 0 0 1 3.464 1.435l.007-.006.75-.75a.749.749 0 0 1 1.275.326.749.749 0 0 1-.215.734l-.75.75-.006.007a6.75 6.75 0 1 1-10.548 0L2.72 5.03l-.75-.75a.751.751 0 0 1 .018-1.042.751.751 0 0 1 1.042-.018l.75.75.007.006A6.72 6.72 0 0 1 7.25 2.541V1.5H6.5a.75.75 0 0 1-.75-.75ZM8 14.5a5.25 5.25 0 1 0-.001-10.501A5.25 5.25 0 0 0 8 14.5Zm.389-6.7 1.33-1.33a.75.75 0 1 1 1.061 1.06L9.450 8.861A1.503 1.503 0 0 1 8 10.75a1.499 1.499 0 1 1 .389-2.950Z"/></svg><div style="position:absolute;left:1437px;top:952.5px;height:18px;line-height:18px;font-size:12px;color:#a0a6ae;font-weight:normal;white-space:nowrap;font-style:italic">Failure</div><svg style="position:absolute;left:1605px;top:940px;" width="16" height="16" viewBox="0 0 16 16"><path fill="#c4c7cb" d="M8 9a1.5 1.5 0 1 0 0-3 1.5 1.5 0 0 0 0 3ZM1.5 9a1.5 1.5 0 1 0 0-3 1.5 1.5 0 0 0 0 3Zm13 0a1.5 1.5 0 1 0 0-3 1.5 1.5 0 0 0 0 3Z"/></svg><div style="position:absolute;left:363px;top:987px;width:1278px;height:1px;background:#3b3c3e"></div><svg style="position:absolute;left:379px;top:1008px;" width="16" height="16" viewBox="0 0 16 16"><path fill="#f0605d" d="M2.343 13.657A8 8 0 1 1 13.658 2.343 8 8 0 0 1 2.343 13.657ZM6.03 4.97a.751.751 0 0 0-1.042.018.751.751 0 0 0-.018 1.042L6.940 8 4.97 9.970a.749.749 0 0 0 .326 1.275.749.749 0 0 0 .734-.215L8 9.060l1.97 1.97a.749.749 0 0 0 1.275-.326.749.749 0 0 0-.215-.734L9.060 8l1.97-1.97a.749.749 0 0 0-.326-1.275.749.749 0 0 0-.734.215L8 6.940Z"/></svg><div style="position:absolute;left:403px;top:1005.0px;height:22px;line-height:22px;font-size:16px;color:#f0f6fc;font-weight:bold;white-space:nowrap;">Merge pull request #297 from firestartr-test/automated/test-99-0</div><div style="position:absolute;left:403px;top:1031.5px;height:18px;line-height:18px;font-size:12px;color:#a0a6ae;font-weight:normal;white-space:nowrap;"><b style="font-weight:bold">.github/workflows/evaluate-changes.yaml</b> #616: Commit <span style="border-bottom:1px solid #a0a6ae">ad1b046</span> pushed by juanjosevazquezgil</div><div style="position:absolute;left:1018px;top:1018px;height:18px;line-height:18px;padding:0 6px;border-radius:6px;background:#16212d;color:#74a0ea;font-family:'Liberation Mono',monospace;font-size:12px;white-space:nowrap">main</div><svg style="position:absolute;left:1417px;top:1010px;" width="16" height="16" viewBox="0 0 16 16"><path fill="#a0a6ae" d="M4.75 0a.75.75 0 0 1 .75.75V2h5V.75a.75.75 0 0 1 1.5 0V2h1.25c.966 0 1.75.784 1.75 1.75v10.5A1.75 1.75 0 0 1 13.25 16H2.75A1.75 1.75 0 0 1 1 14.25V3.75C1 2.784 1.784 2 2.75 2H4V.75A.75.75 0 0 1 4.75 0ZM2.5 7.5v6.75c0 .138.112.25.25.25h10.5a.25.25 0 0 0 .25-.25V7.5Zm10.75-4H2.75a.25.25 0 0 0-.25.25V6h11V3.75a.25.25 0 0 0-.25-.25Z"/></svg><div style="position:absolute;left:1437px;top:1009.5px;height:18px;line-height:18px;font-size:12px;color:#a0a6ae;font-weight:normal;white-space:nowrap;">yesterday</div><svg style="position:absolute;left:1417px;top:1031px;" width="16" height="16" viewBox="0 0 16 16"><path fill="#a0a6ae" d="M5.75.75A.75.75 0 0 1 6.5 0h3a.75.75 0 0 1 0 1.5h-.75v1l-.001.041a6.724 6.724 0 0 1 3.464 1.435l.007-.006.75-.75a.749.749 0 0 1 1.275.326.749.749 0 0 1-.215.734l-.75.75-.006.007a6.75 6.75 0 1 1-10.548 0L2.72 5.03l-.75-.75a.751.751 0 0 1 .018-1.042.751.751 0 0 1 1.042-.018l.75.75.007.006A6.72 6.72 0 0 1 7.25 2.541V1.5H6.5a.75.75 0 0 1-.75-.75ZM8 14.5a5.25 5.25 0 1 0-.001-10.501A5.25 5.25 0 0 0 8 14.5Zm.389-6.7 1.33-1.33a.75.75 0 1 1 1.061 1.06L9.450 8.861A1.503 1.503 0 0 1 8 10.75a1.499 1.499 0 1 1 .389-2.950Z"/></svg><div style="position:absolute;left:1437px;top:1030.5px;height:18px;line-height:18px;font-size:12px;color:#a0a6ae;font-weight:normal;white-space:nowrap;font-style:italic">Failure</div><svg style="position:absolute;left:1605px;top:1018px;" width="16" height="16" viewBox="0 0 16 16"><path fill="#c4c7cb" d="M8 9a1.5 1.5 0 1 0 0-3 1.5 1.5 0 0 0 0 3ZM1.5 9a1.5 1.5 0 1 0 0-3 1.5 1.5 0 0 0 0 3Zm13 0a1.5 1.5 0 1 0 0-3 1.5 1.5 0 0 0 0 3Z"/></svg><div style="position:absolute;left:363px;top:1065px;width:1278px;height:1px;background:#3b3c3e"></div>
</div></body></html>
